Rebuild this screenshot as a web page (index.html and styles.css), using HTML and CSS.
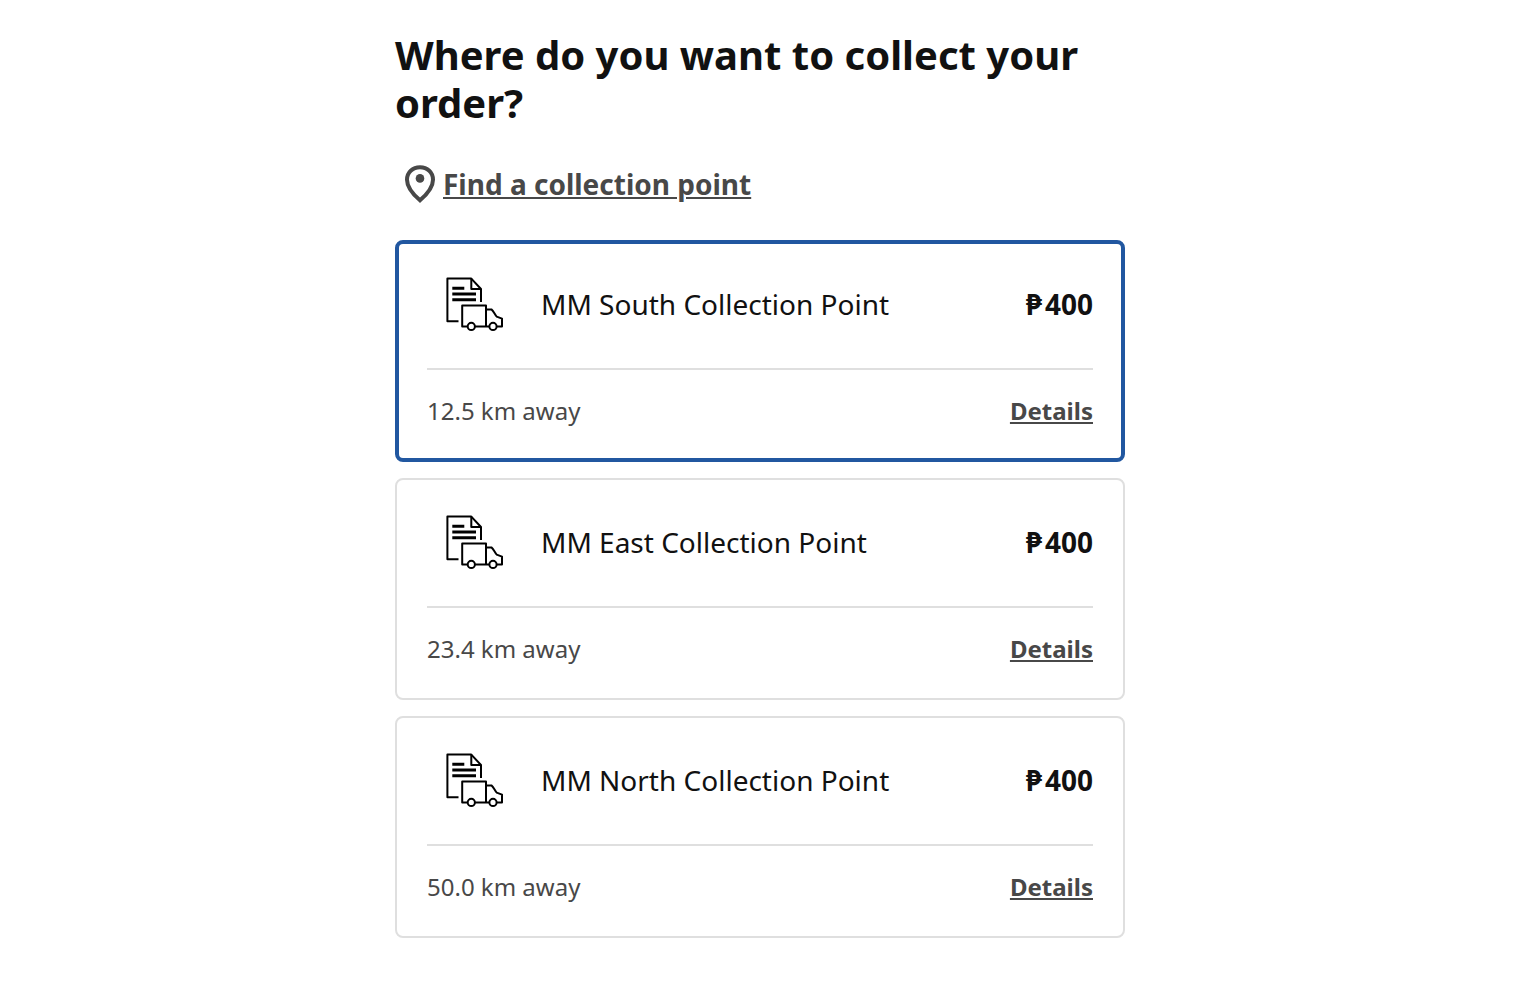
FILE: index.html
```html
<!DOCTYPE html>
<html lang="en">
<head>
    <meta charset="UTF-8">
    <meta name="viewport" content="width=device-width, initial-scale=1.0">
    <title>Collect your order</title>
    <link rel="stylesheet" href="styles.css">
</head>
<body>
    <!-- Shared delivery icon -->
    <svg class="sprite" aria-hidden="true">
        <symbol id="truck" viewBox="0 0 60 56">
            <g fill="none" stroke="#000" stroke-width="2" stroke-linejoin="round">
                <path d="M13.5 45.2H2.4V2.6H26.3L36 13V26"/>
                <path d="M26.3 2.6V13H36"/>
                <path stroke-width="3" d="M7.3 12.2H19.3M7.3 18H31M7.3 23.7H31"/>
                <path d="M22.8 50.4H17.2V29.4H41V50.4H29.8M41 33.4H46.4C48.6 35 49.5 38.4 51.7 40.6L57 42.6V50.4H51.6M44.4 50.4H41"/>
                <circle cx="26.3" cy="50.4" r="3.6"/>
                <circle cx="48" cy="50.4" r="3.6"/>
            </g>
        </symbol>
    </svg>

    <main class="container">
        <h1>Where do you want to collect your order?</h1>
        <div class="find">
            <svg class="pin" viewBox="0 0 48 48" aria-hidden="true">
                <path d="M25 40.3C18 34.3 12 27.5 12 19.7C12 12.4 17.6 7.2 25 7.2S38 12.4 38 19.7C38 27.5 32 34.3 25 40.3Z" fill="none" stroke="#484848" stroke-width="4"/>
                <circle cx="25" cy="18.4" r="4.3" fill="#484848"/>
            </svg>
            <a href="#">Find a collection point</a>
        </div>

        <ul class="points">
            <li class="card selected">
                <div class="card-top">
                    <svg class="truck" aria-hidden="true"><use href="#truck"/></svg>
                    <span class="name">MM South Collection Point</span>
                    <span class="price"><span class="currency">₱</span>400</span>
                </div>
                <div class="card-bottom">
                    <span>12.5 km away</span>
                    <a href="#">Details</a>
                </div>
            </li>
            <li class="card">
                <div class="card-top">
                    <svg class="truck" aria-hidden="true"><use href="#truck"/></svg>
                    <span class="name">MM East Collection Point</span>
                    <span class="price"><span class="currency">₱</span>400</span>
                </div>
                <div class="card-bottom">
                    <span>23.4 km away</span>
                    <a href="#">Details</a>
                </div>
            </li>
            <li class="card">
                <div class="card-top">
                    <svg class="truck" aria-hidden="true"><use href="#truck"/></svg>
                    <span class="name">MM North Collection Point</span>
                    <span class="price"><span class="currency">₱</span>400</span>
                </div>
                <div class="card-bottom">
                    <span>50.0 km away</span>
                    <a href="#">Details</a>
                </div>
            </li>
        </ul>
    </main>
</body>
</html>
```
FILE: styles.css
```css
* {
    box-sizing: border-box;
}
body {
    font-family: "Noto Sans", sans-serif;
    background-color: #fff;
    color: #111;
    margin: 0;
    padding: 31px 16px 64px 18px;
}
.sprite {
    display: none;
}
.container {
    max-width: 730px;
    margin: 0 auto;
}
h1 {
    font-size: 40px;
    line-height: 48px;
    font-weight: 700;
    margin: 0 0 33px;
}
a {
    color: #484848;
    font-weight: 700;
}
.find {
    display: flex;
    align-items: center;
    font-size: 28px;
    line-height: 48px;
    margin-bottom: 32px;
}
.pin {
    width: 48px;
    height: 48px;
    flex: none;
}
.points {
    display: grid;
    gap: 16px;
    list-style: none;
    margin: 0;
    padding: 0;
}
.card {
    border: 2px solid #dfdfdf;
    border-radius: 8px;
    padding: 2px 30px;
}
/* thicker border, so the padding gives 2px back */
.card.selected {
    border: 4px solid #2157a0;
    padding: 0 28px;
}
.card-top {
    display: flex;
    align-items: center;
    gap: 18px;
    padding: 32px 0 36px;
    border-bottom: 2px solid #dfdfdf;
    font-size: 28px;
    line-height: 40px;
}
.truck {
    width: 60px;
    height: 56px;
    margin: 0 18px;
    flex: none;
}
.name {
    flex: 1;
}
.price {
    font-weight: 700;
}
.currency {
    margin-right: 3px;
}
.card-bottom {
    display: flex;
    align-items: center;
    justify-content: space-between;
    padding: 23px 0 29px;
    font-size: 24px;
    line-height: 36px;
    color: #484848;
}

@media (max-width: 480px) {
    .card {
        padding: 2px 16px;
    }
    .card.selected {
        padding: 0 14px;
    }
    .truck {
        margin: 0;
    }
}
```
